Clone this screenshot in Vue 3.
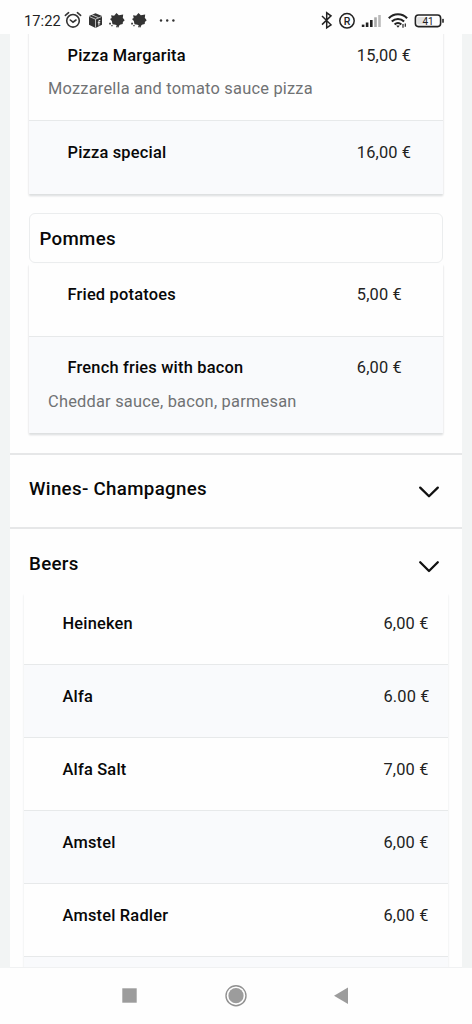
<script setup>
const pizzas = [
  { name: 'Pizza Margarita', price: '15,00 €', note: 'Mozzarella and tomato sauce pizza' },
  { name: 'Pizza special', price: '16,00 €' },
]
const pommes = [
  { name: 'Fried potatoes', price: '5,00 €' },
  { name: 'French fries with bacon', price: '6,00 €', note: 'Cheddar sauce, bacon, parmesan' },
]
const beers = [
  { name: 'Heineken', price: '6,00 €' },
  { name: 'Alfa', price: '6.00 €' },
  { name: 'Alfa Salt', price: '7,00 €' },
  { name: 'Amstel', price: '6,00 €' },
  { name: 'Amstel Radler', price: '6,00 €' },
]
</script>

<template>
  <div class="phone">
    <header class="status">
      <span class="clock">17:22</span>
      <svg class="left-icons" width="116" height="20" viewBox="0 0 116 20">
        <g fill="none" stroke="#333" stroke-width="1.6" stroke-linecap="round">
          <circle cx="10" cy="10.8" r="6.3" />
          <path d="M7.3 10l2.7 2.2 3-2.2M2.4 5.4l3.2-2.7M17.6 5.4l-3.2-2.7" />
        </g>
        <path d="M26 6l6.5-2.8L39 6v8.8L32.5 18 26 14.8z" fill="#333" />
        <path d="M26.3 6.5l6.2 2.7 6.2-2.7M32.5 9.2v8.5M29 4.9l6.5 2.8" fill="none" stroke="#ddd" stroke-width=".8" />
        <path d="M37.3 10.5h-1.4v5M34.8 12.7h2.4" fill="none" stroke="#eee" stroke-width="1" />
        <g v-for="x in [-0.5, 21.5]" :key="x" :transform="`translate(${x} 0)`">
          <path d="M48.6 5.2l3 .6 2.4-2.7 2.3 2.2 4.4-.8-.4 3.2 1.9 2.6-1.8 1.6-.2 2.2-2.7.7-1.9 2-2.5-2-3.1-.6-.7-3.1-1.8-2 1.7-1.1z" fill="#333" />
          <path d="M46.7 12.8h1.7v1.7h-1.7zM48.8 15h1.3v1.3h-1.3zM53.5 16.2h3v1h-3z" fill="#333" />
        </g>
        <g fill="#333"><circle cx="98" cy="10.5" r="1.2" /><circle cx="104.2" cy="10.5" r="1.2" /><circle cx="110.4" cy="10.5" r="1.2" /></g>
      </svg>
      <svg class="right-icons" width="128" height="20" viewBox="0 0 128 20">
        <path d="M5 6l9 8.8-4.3 3V2.8l4.3 3-9 8.8" fill="none" stroke="#222" stroke-width="1.5" />
        <circle cx="30" cy="10.8" r="7.2" fill="none" stroke="#222" stroke-width="1.5" />
        <text x="30" y="14.6" text-anchor="middle" font-size="10.5" font-weight="500" fill="#222">R</text>
        <g fill="#222">
          <rect x="44.8" y="14.6" width="2.6" height="2.4" /><rect x="48.8" y="12.5" width="2.6" height="4.5" />
          <rect x="53" y="10" width="2.6" height="7" />
          <rect x="57.2" y="7.3" width="2.6" height="9.7" fill="#aaa" /><rect x="61.2" y="5" width="2.6" height="12" fill="#bbb" />
        </g>
        <g fill="none" stroke="#222" stroke-width="2.1">
          <path d="M71.8 8.2c5-5.3 13.3-5.3 18.3 0M74.8 11.6c3.5-3.5 8.8-3.5 12.3 0M77.6 14.5c2-1.9 4.8-1.9 6.7 0" />
        </g>
        <path d="M79.2 15.5h3.6l-1.8 2.2zM85.4 14h1.2v3.8h-1.2zM87.7 13.5h1.2v3.2h-1.2z" fill="#222" />
        <rect x="98.4" y="5" width="25.2" height="11.6" rx="3" fill="none" stroke="#222" stroke-width="1.6" />
        <rect x="100.2" y="7" width="9.5" height="7.6" rx="1" fill="#e2e2e2" />
        <rect x="125.2" y="8.8" width="1.6" height="4" rx=".6" fill="#222" />
        <text x="111" y="14.5" text-anchor="middle" font-size="10" fill="#222">41</text>
      </svg>
    </header>

    <main class="viewport">
      <div class="sheet">
        <section class="group foods">
          <ul class="card first">
            <li v-for="d in pizzas" :key="d.name" class="row">
              <span class="name">{{ d.name }}</span><span class="price">{{ d.price }}</span>
              <p v-if="d.note" class="note">{{ d.note }}</p>
            </li>
          </ul>
          <h3 class="subhead">Pommes</h3>
          <ul class="card">
            <li v-for="d in pommes" :key="d.name" class="row">
              <span class="name">{{ d.name }}</span><span class="price">{{ d.price }}</span>
              <p v-if="d.note" class="note">{{ d.note }}</p>
            </li>
          </ul>
        </section>

        <section class="group">
          <div class="head">
            <h2>Wines- Champagnes</h2>
            <svg width="22" height="14" viewBox="0 0 22 14"><path d="M2.2 2.6L11 11.3l8.8-8.7" /></svg>
          </div>
        </section>

        <section class="group">
          <div class="head open">
            <h2>Beers</h2>
            <svg width="22" height="14" viewBox="0 0 22 14"><path d="M2.2 2.3L11 11l8.8-8.7" /></svg>
          </div>
          <ul class="card wide">
            <li v-for="d in beers" :key="d.name" class="row">
              <span class="name">{{ d.name }}</span><span class="price">{{ d.price }}</span>
            </li>
            <li class="row next"></li>
          </ul>
        </section>
      </div>
    </main>

    <nav class="nav">
      <svg width="472" height="56" viewBox="0 0 472 56">
        <rect x="122.3" y="20.3" width="14.4" height="14.4" fill="#9c9c9c" />
        <circle cx="236" cy="27.7" r="10" fill="none" stroke="#919191" stroke-width="1.4" />
        <circle cx="236" cy="27.7" r="7.6" fill="#9c9c9c" />
        <path d="M334 27.8l14-8.2v16.4z" fill="#9c9c9c" />
      </svg>
    </nav>
  </div>
</template>

<style>
body { margin: 0; background: #fff; }
</style>

<style scoped>
.phone {
  width: 472px;
  height: 1024px;
  display: flex;
  flex-direction: column;
  overflow: hidden;
  background: #fefefe;
  font-family: Roboto, "Liberation Sans", sans-serif;
  color: #080808;
}
.status {
  flex: none;
  height: 34px;
  box-sizing: border-box;
  padding: 10px 27px 0 24px;
  display: flex;
  align-items: flex-start;
}
.clock { width: 39px; font-size: 14.6px; line-height: 23px; letter-spacing: 0.1px; color: #222; white-space: nowrap; }
.right-icons { margin-left: auto; }
.viewport { flex: none; height: 934px; padding: 0 10px; overflow: hidden; background: #f2f4f4; }
.sheet { height: 933px; overflow: hidden; display: flow-root; background: #fefefe; border-bottom: 1px solid #f0f1f2; }
.group { border-bottom: 2px solid #e6e7e8; }
.foods { margin-top: -10px; height: 429px; padding: 0 19px; }
.card {
  margin: 0;
  padding: 0;
  list-style: none;
  box-shadow: 0 2px 2px #dcdedf, 0 1px 2px #eff1f2;
}
.row {
  box-sizing: border-box;
  min-height: 73px;
  padding: 20px 0 0 38.5px;
  display: grid;
  grid-template-columns: 289.3px 1fr;
  align-content: start;
  border-bottom: 1px solid #e7e9ea;
  background: #fefefe;
  font-size: 16.4px;
  line-height: 22px;
}
.row:nth-child(even) { background: #f9fafc; }
.row:last-child { border-bottom: 0; }
.name { font-weight: 490; letter-spacing: 0.2px; }
.price { color: #222; letter-spacing: 0.15px; }
.note {
  grid-column: 1 / -1;
  margin: 11px 0 19px -19.5px;
  line-height: 24px;
  letter-spacing: 0.22px;
  color: #707274;
}
.first .row { padding-top: 21px; }
.first .note { margin-top: 10px; }
.subhead {
  box-sizing: border-box;
  height: 50px;
  margin: 19px 0 1px;
  padding-left: 9.5px;
  border: 1px solid #ebedee;
  border-radius: 6px;
  font-size: 18.7px;
  line-height: 50px;
  font-weight: 480;
  letter-spacing: 0.3px;
}
.head { height: 72px; padding: 0 22px 0 19px; display: flex; justify-content: space-between; }
.head.open { height: 63px; }
.head h2 { margin: 22px 0 0; font-size: 18.7px; line-height: 24px; font-weight: 480; letter-spacing: 0.33px; }
.head svg { margin-top: 30px; }
.head.open h2 { padding-top: 1px; }
.head.open svg { margin-top: 31px; }
.head path { fill: none; stroke: #111; stroke-width: 2.3; stroke-linecap: round; stroke-linejoin: round; }
.card.wide { margin: 0 14px; box-shadow: 0 3px 2px #e2e5e6; }
.wide .row { grid-template-columns: 321px 1fr; padding-top: 21px; }
.nav { flex: none; height: 56px; background: #fefefe; }
.nav svg { display: block; }
</style>
